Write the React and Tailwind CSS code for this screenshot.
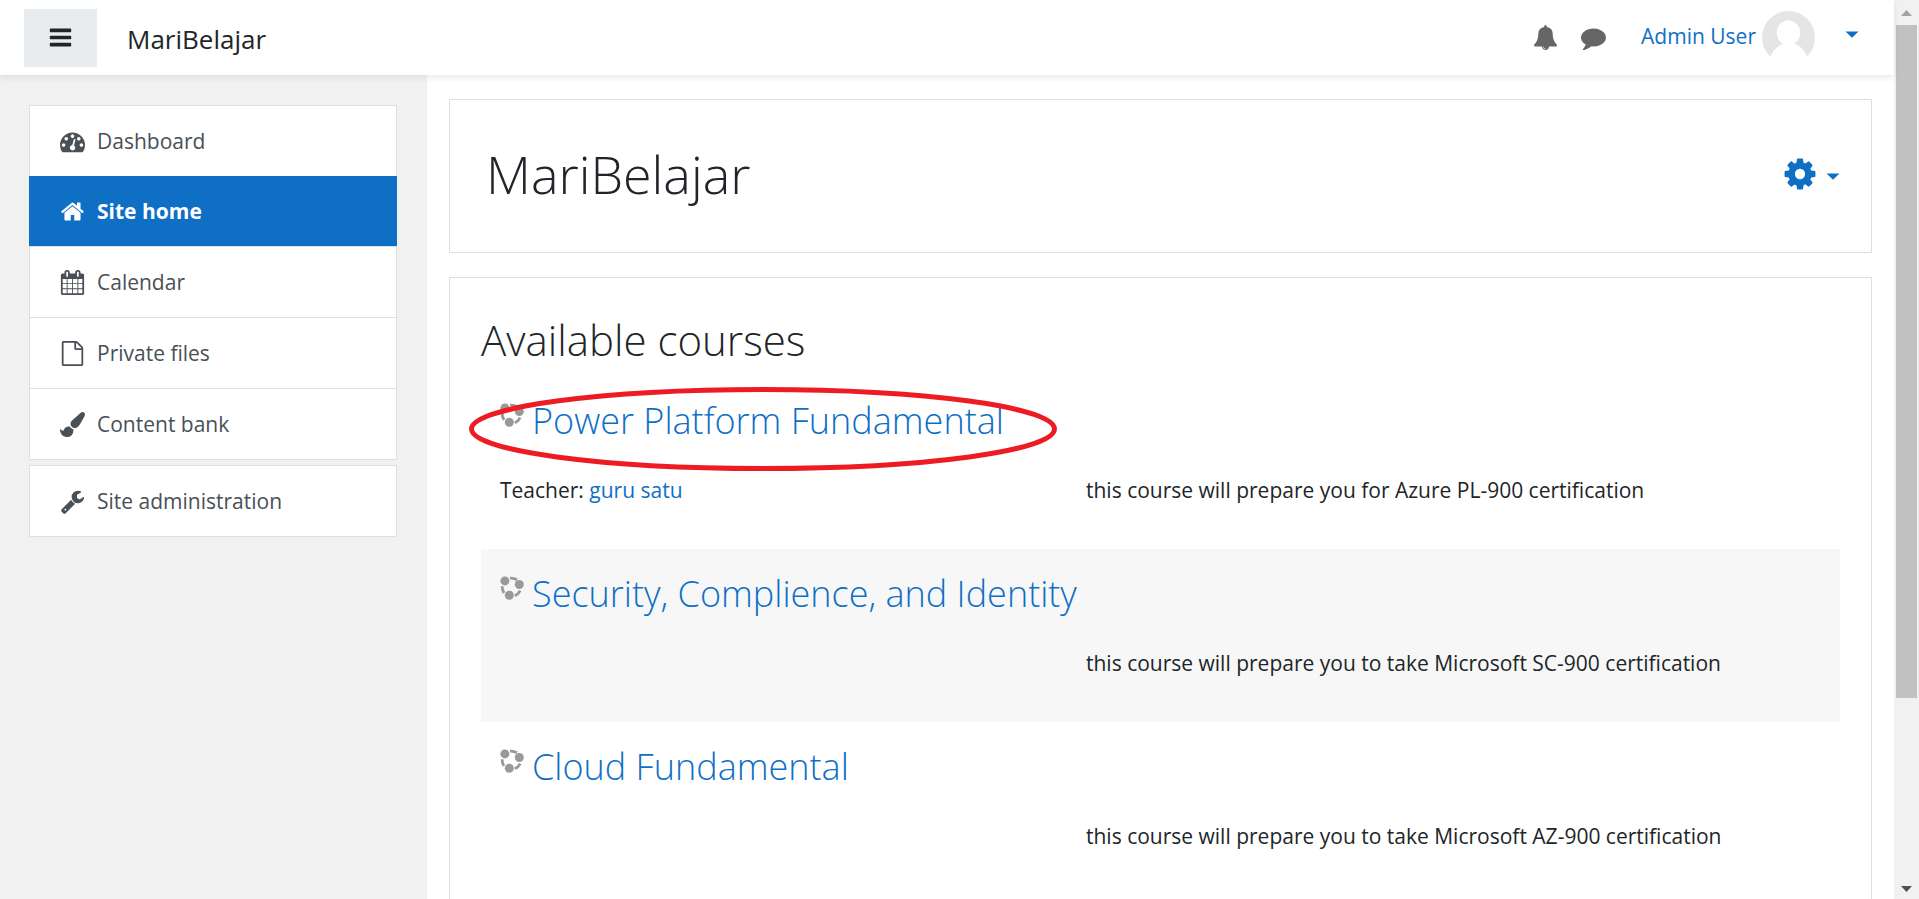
const PATHS = {
  bars: 'M1664 1344v128q0 26-19 45t-45 19h-1408q-26 0-45-19t-19-45v-128q0-26 19-45t45-19h1408q26 0 45 19t19 45zm0-512v128q0 26-19 45t-45 19h-1408q-26 0-45-19t-19-45v-128q0-26 19-45t45-19h1408q26 0 45 19t19 45zm0-512v128q0 26-19 45t-45 19h-1408q-26 0-45-19t-19-45v-128q0-26 19-45t45-19h1408q26 0 45 19t19 45z',
  dashboard:
    'M384 1152q0-53-37.5-90.5t-90.5-37.5-90.5 37.5-37.5 90.5 37.5 90.5 90.5 37.5 90.5-37.5 37.5-90.5zm192-448q0-53-37.5-90.5t-90.5-37.5-90.5 37.5-37.5 90.5 37.5 90.5 90.5 37.5 90.5-37.5 37.5-90.5zm428 481l101-382q6-26-7.5-48.5t-38.5-29.5-48 6.5-30 39.5l-101 382q-60 5-107 43.5t-63 98.5q-20 77 20 146t117 89 146-20 89-117q16-60-6-117t-72-91zm660-33q0-53-37.5-90.5t-90.5-37.5-90.5 37.5-37.5 90.5 37.5 90.5 90.5 37.5 90.5-37.5 37.5-90.5zm-640-640q0-53-37.5-90.5t-90.5-37.5-90.5 37.5-37.5 90.5 37.5 90.5 90.5 37.5 90.5-37.5 37.5-90.5zm448 192q0-53-37.5-90.5t-90.5-37.5-90.5 37.5-37.5 90.5 37.5 90.5 90.5 37.5 90.5-37.5 37.5-90.5zm320 448q0 261-141 483-19 29-54 29h-1402q-35 0-54-29-141-221-141-483 0-182 71-348t191-286 286-191 348-71 348 71 286 191 191 286 71 348z',
  home: 'M1472 992v480q0 26-19 45t-45 19h-384v-384h-256v384h-384q-26 0-45-19t-19-45v-480q0-1 .5-3t.5-3l575-474 575 474q1 2 1 6zm223-69l-62 74q-8 9-21 11h-3q-13 0-21-7l-692-577-692 577q-12 8-24 7-13-2-21-11l-62-74q-8-10-7-23.5t11-21.5l719-599q32-26 76-26t76 26l244 204v-195q0-14 9-23t23-9h192q14 0 23 9t9 23v408l219 182q10 8 11 21.5t-7 23.5z',
  calendar:
    'M192 1664h288v-288h-288v288zm352 0h320v-288h-320v288zm-352-352h288v-320h-288v320zm352 0h320v-320h-320v320zm-352-384h288v-288h-288v288zm736 736h320v-288h-320v288zm-384-736h320v-288h-320v288zm768 736h288v-288h-288v288zm-384-352h320v-320h-320v320zm-352-864v-288q0-13-9.5-22.5t-22.5-9.5h-64q-13 0-22.5 9.5t-9.5 22.5v288q0 13 9.5 22.5t22.5 9.5h64q13 0 22.5-9.5t9.5-22.5zm736 864h288v-320h-288v320zm-384-384h320v-288h-320v288zm384 0h288v-288h-288v288zm32-480v-288q0-13-9.5-22.5t-22.5-9.5h-64q-13 0-22.5 9.5t-9.5 22.5v288q0 13 9.5 22.5t22.5 9.5h64q13 0 22.5-9.5t9.5-22.5zm384-64v1280q0 52-38 90t-90 38h-1408q-52 0-90-38t-38-90v-1280q0-52 38-90t90-38h128v-96q0-66 47-113t113-47h64q66 0 113 47t47 113v96h384v-96q0-66 47-113t113-47h64q66 0 113 47t47 113v96h128q52 0 90 38t38 90z',
  file: 'M1596 380q28 28 48 76t20 88v1152q0 40-28 68t-68 28h-1344q-40 0-68-28t-28-68v-1600q0-40 28-68t68-28h896q40 0 88 20t76 48zm-444-244v376h376q-10-29-22-41l-313-313q-12-12-41-22zm384 1528v-1024h-416q-40 0-68-28t-28-68v-416h-768v1536h1280z',
  brush:
    'M1615 0q70 0 122.5 46.5t52.5 116.5q0 63-45 151-332 629-465 752-97 91-218 91-126 0-216.5-92.5t-90.5-219.5q0-128 92-212l638-579q59-54 130-54zm-909 1034q39 76 106.5 130t150.5 76l1 71q4 213-129.5 347t-348.5 134q-123 0-218-46.5t-152.5-127.5-86.5-183-29-220q7 5 41 30t62 44.5 59 36.5 46 17q41 0 55-37 25-66 57.5-112.5t69.5-76 88-47.5 103-25.5 125-10.5z',
  wrench:
    'M448 1472q0-26-19-45t-45-19-45 19-19 45 19 45 45 19 45-19 19-45zm644-420l-682 682q-37 37-90 37-52 0-91-37l-106-108q-38-36-38-90 0-53 38-91l681-681q39 98 114.5 173.5t173.5 114.5zm634-435q0 39-23 106-47 134-164.5 217.5t-258.5 83.5q-185 0-316.5-131.5t-131.5-316.5 131.5-316.5 316.5-131.5q58 0 121.5 16.5t107.5 46.5q16 11 16 28t-16 28l-293 169v224l193 107q5-3 79-48.5t135.5-81 70.5-35.5q15 0 23.5 10t8.5 25z',
  bell: 'M912 1696q0-16-16-16-59 0-101.5-42.5t-42.5-101.5q0-16-16-16t-16 16q0 73 51.5 124.5t124.5 51.5q16 0 16-16zm816-288q0 52-38 90t-90 38h-448q0 106-75 181t-181 75-181-75-75-181h-448q-52 0-90-38t-38-90q50-42 91-88t85-119.5 74.5-158.5 50-206 19.5-260q0-152 117-282.5t307-158.5q-8-19-8-39 0-40 28-68t68-28 68 28 28 68q0 20-8 39 190 28 307 158.5t117 282.5q0 139 19.5 260t50 206 74.5 158.5 85 119.5 91 88z',
  comment:
    'M1792 896q0 174-120 321.5t-326 233-450 85.5q-70 0-145-8-198 175-460 242-49 14-114 22-17 2-30.5-9t-17.5-29v-1q-3-4-.5-12t2-10 4.5-9.5l6-9 7-8.5 8-9q7-8 31-34.5t34.5-38 31-39.5 32.5-51 27-59 26-76q-157-89-247.5-220t-90.5-281q0-130 71-248.5t191-204.5 286-136.5 348-50.5q244 0 450 85.5t326 233 120 321.5z',
  cog: 'M1152 896q0-106-75-181t-181-75-181 75-75 181 75 181 181 75 181-75 75-181zm512-109v222q0 12-8 23t-20 13l-185 28q-19 54-39 91 35 50 107 138 10 12 10 25t-9 23q-27 37-99 108t-94 71q-12 0-26-9l-138-108q-44 23-91 38-16 136-29 186-7 28-36 28h-222q-14 0-24.5-8.5t-11.5-21.5l-28-184q-49-16-90-37l-141 107q-10 9-25 9-14 0-25-11-126-114-165-168-7-10-7-23 0-12 8-23 15-21 51-66.5t54-70.5q-27-50-41-99l-183-27q-13-2-21-12.5t-8-23.5v-222q0-12 8-23t19-13l186-28q14-46 39-92-40-57-107-138-10-12-10-24 0-10 9-23 26-36 98.5-107.5t94.5-71.5q13 0 26 10l138 107q44-23 91-38 16-136 29-186 7-28 36-28h222q14 0 24.5 8.5t11.5 21.5l28 184q49 16 90 37l142-107q9-9 24-9 13 0 25 10 129 119 165 170 7 8 7 22 0 12-8 23-15 21-51 66.5t-54 70.5q26 50 41 98l183 28q13 2 21 12.5t8 23.5z',
};

function Icon({ name, className }) {
  return (
    <svg viewBox="0 0 1792 1792" fill="currentColor" aria-hidden="true" className={className}>
      <path d={PATHS[name]} />
    </svg>
  );
}

function Caret() {
  return (
    <svg viewBox="0 0 14 7" fill="currentColor" aria-hidden="true" className="h-[7px] w-3.5">
      <path d="M0.5 0.5h13L7 6.8z" />
    </svg>
  );
}

function Avatar() {
  return (
    <svg viewBox="0 0 53 53" aria-hidden="true" className="size-[53px]">
      <circle cx="26.5" cy="26.5" r="26.5" fill="#e5e5e5" />
      <path
        fill="#fff"
        d="M26.500 9.500C33.200 9.500 38.200 14.500 38.200 21.500c0 5-2.200 9-6 11.300 6.500 2.200 11 7.200 12.800 13.200V53H8.500V46c1.800-6 6.300-11 12.500-13.200-3.800-2.300-6.200-6.300-6.200-11.300C14.800 14.500 19.800 9.500 26.500 9.500z"
      />
    </svg>
  );
}

function EnrolIcon() {
  return (
    <svg viewBox="0 0 24 24" aria-hidden="true" className="size-6 shrink-0" fill="#999">
      <circle cx="4.900" cy="4.900" r="4.500" />
      <circle cx="19.300" cy="8.500" r="4.500" />
      <circle cx="9.300" cy="19.300" r="4.500" />
      <g fill="none" stroke="#999" strokeWidth="2.800">
        <path d="M10 2.100q3.800-.3 7 1.700" />
        <path d="M2.200 10.200q-.2 3.800 1.800 6.800" />
        <path d="M20.200 14.600q-1.700 3.400-5.400 5.100" />
      </g>
    </svg>
  );
}

const NAV = [
  { label: 'Dashboard', icon: 'dashboard' },
  { label: 'Site home', icon: 'home', active: true },
  { label: 'Calendar', icon: 'calendar' },
  { label: 'Private files', icon: 'file' },
  { label: 'Content bank', icon: 'brush' },
];

const COURSES = [
  {
    title: 'Power Platform Fundamental',
    teacher: 'guru satu',
    summary: 'this course will prepare you for Azure PL-900 certification',
    circled: true,
  },
  {
    title: 'Security, Complience, and Identity',
    summary: 'this course will prepare you to take Microsoft SC-900 certification',
  },
  {
    title: 'Cloud Fundamental',
    summary: 'this course will prepare you to take Microsoft AZ-900 certification',
  },
];

function NavItem({ label, icon, active }) {
  return (
    <li>
      <a
        href="#"
        aria-current={active ? 'page' : undefined}
        className={
          active
            ? 'flex h-[70px] items-center gap-3 border-x border-[#0f6fc5] bg-[#0f6fc5] pl-[30px] font-bold text-white'
            : 'flex h-[71px] items-center gap-3 border border-b-0 border-[#dedfe0] bg-white pl-[30px] text-[#495057]'
        }
      >
        <Icon name={icon} className="size-[25px]" />
        {label}
      </a>
    </li>
  );
}

function Course({ title, teacher, summary, circled }) {
  return (
    <li className="relative h-[173px] px-[19px] pt-5 even:bg-[#f7f7f7]">
      <h3 className="flex gap-2">
        <span className="pt-[7px]">
          <EnrolIcon />
        </span>
        <a href="#" className="text-[36px] leading-[50px] font-light text-[#0f6fc5]">
          {title}
        </a>
      </h3>
      <div className="grid grid-cols-[586px_1fr] pt-7">
        <p>
          {teacher && (
            <>
              Teacher:{' '}
              <a href="#" className="text-[#0f6fc5]">
                {teacher}
              </a>
            </>
          )}
        </p>
        <p>{summary}</p>
      </div>
      {circled && (
        <svg
          viewBox="0 0 588 84"
          aria-hidden="true"
          className="pointer-events-none absolute top-[11px] -left-3 h-[84px] w-[588px]"
        >
          <ellipse cx="294" cy="42" rx="291.500" ry="39.500" fill="none" stroke="#ed1c24" strokeWidth="5" />
        </svg>
      )}
    </li>
  );
}

export default function App() {
  return (
    <div className="flex h-screen overflow-hidden bg-white font-['Open_Sans','Noto_Sans',sans-serif] text-[21px] leading-8 text-[#212529]">
      <div className="flex min-w-0 flex-1 flex-col">
        <header className="z-10 flex h-[75px] shrink-0 items-center bg-white pr-[35px] pl-6 shadow-[0_3px_6px_rgba(0,0,0,0.08)]">
          <button
            type="button"
            aria-label="Side panel"
            className="flex h-[58px] w-[73px] items-center justify-center bg-[#e9ecef]"
          >
            <Icon name="bars" className="size-[25px]" />
          </button>
          <a href="#" className="pt-0.5 pl-[30px] text-[26px]">
            MariBelajar
          </a>
          <div className="ml-auto flex items-center text-[#666]">
            <button type="button" aria-label="Notifications">
              <Icon name="bell" className="size-[25px]" />
            </button>
            <button type="button" aria-label="Messages" className="ml-[23px]">
              <Icon name="comment" className="size-[25px]" />
            </button>
            <button type="button" className="ml-[35px] flex items-center text-[#0f6fc5]">
              <span className="pr-1.5 pb-1">Admin User</span>
              <Avatar />
              <span className="pb-1.5 pl-[30px]">
                <Caret />
              </span>
            </button>
          </div>
        </header>
        <div className="flex min-h-0 flex-1">
          <aside className="w-[427px] shrink-0 bg-[#f1f1f1] pt-[30px] pr-[30px] pl-[29px]">
            <nav aria-label="Main">
              <ul className="border-b border-[#dedfe0]">
                {NAV.map((item) => (
                  <NavItem key={item.label} {...item} />
                ))}
              </ul>
              <ul className="mt-[5px] border-b border-[#dedfe0]">
                <NavItem label="Site administration" icon="wrench" />
              </ul>
            </nav>
          </aside>
          <main className="flex min-w-0 flex-1 flex-col gap-6 overflow-hidden px-[22px] pt-6">
            <section className="flex h-[154px] shrink-0 items-center justify-between border border-[#dedfe0] pr-[31px] pb-1 pl-9">
              <h1 className="text-[52px] leading-[72px] font-light">MariBelajar</h1>
              <button type="button" aria-label="Site settings" className="flex items-center gap-2 text-[#0f6fc5]">
                <Icon name="cog" className="size-9" />
                <span className="pt-1">
                  <Caret />
                </span>
              </button>
            </section>
            <section className="shrink-0 border border-[#dedfe0] px-[31px] pt-8 pb-8">
              <h2 className="h-[66px] text-[42px] leading-[60px] font-light">Available courses</h2>
              <ul>
                {COURSES.map((course) => (
                  <Course key={course.title} {...course} />
                ))}
              </ul>
            </section>
          </main>
        </div>
      </div>
      <div aria-hidden="true" className="flex w-[25px] shrink-0 flex-col items-center bg-[#f1f1f1]">
        <svg viewBox="0 0 25 25" className="size-[25px] shrink-0">
          <path d="M7 16h11l-5.500-6z" fill="#a3a3a3" />
        </svg>
        <div className="min-h-0 w-[21px] flex-[673] bg-[#c1c1c1]" />
        <div className="flex-[176]" />
        <svg viewBox="0 0 25 25" className="size-[25px] shrink-0">
          <path d="M7 12h11l-5.500 6z" fill="#505050" />
        </svg>
      </div>
    </div>
  );
}
